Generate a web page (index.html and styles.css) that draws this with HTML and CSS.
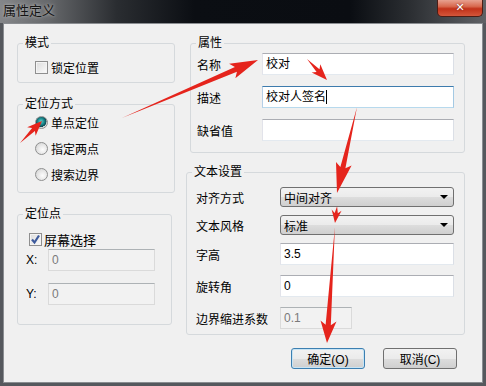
FILE: index.html
```html
<!DOCTYPE html>
<html lang="zh">
<head>
    <meta charset="UTF-8">
    <title>属性定义</title>
    <link rel="stylesheet" href="styles.css">
</head>
<body>
    <div class="window">
        <!-- Title bar -->
        <div class="titlebar">
            <span class="title">属性定义</span>
            <span class="close-btn">&#x2715;</span>
        </div>

        <div class="client">
            <!-- Left column -->
            <div class="col-left">
                <fieldset class="grp grp-mode">
                    <legend>模式</legend>
                    <div class="mode-body">
                        <label class="check-row"><span class="checkbox"></span>锁定位置</label>
                    </div>
                </fieldset>

                <fieldset class="grp grp-locate">
                    <legend>定位方式</legend>
                    <div class="locate-body">
                        <label class="radio-row"><span class="radio checked"></span>单点定位</label>
                        <label class="radio-row"><span class="radio"></span>指定两点</label>
                        <label class="radio-row"><span class="radio"></span>搜索边界</label>
                    </div>
                </fieldset>

                <fieldset class="grp grp-point">
                    <legend>定位点</legend>
                    <div class="point-body">
                        <label class="check-row screen-row">
                            <span class="checkbox checked">
                                <svg width="11" height="11" viewBox="0 0 11 11"><path d="M2 5.5 L4.5 8.5 L9 1.5" fill="none" stroke="#3d5a9c" stroke-width="2.2"/></svg>
                            </span>屏幕选择
                        </label>
                        <div class="xy-row"><span>X:</span><div class="input disabled">0</div></div>
                        <div class="xy-row y-row"><span>Y:</span><div class="input disabled">0</div></div>
                    </div>
                </fieldset>
            </div>

            <!-- Right column -->
            <div class="col-right">
                <fieldset class="grp grp-attr">
                    <legend>属性</legend>
                    <div class="attr-body">
                        <div class="form-row"><span>名称</span><div class="input">校对</div></div>
                        <div class="form-row"><span>描述</span><div class="input focused">校对人签名<span class="caret"></span></div></div>
                        <div class="form-row"><span>缺省值</span><div class="input"></div></div>
                    </div>
                </fieldset>

                <fieldset class="grp grp-text">
                    <legend>文本设置</legend>
                    <div class="text-body">
                        <div class="text-row"><span>对齐方式</span><div class="select">中间对齐<i class="arrow"></i></div></div>
                        <div class="text-row"><span>文本风格</span><div class="select">标准<i class="arrow"></i></div></div>
                        <div class="text-row tall"><span>字高</span><div class="input">3.5</div></div>
                        <div class="text-row tall spaced"><span>旋转角</span><div class="input">0</div></div>
                        <div class="text-row tall spaced"><span>边界缩进系数</span><div class="input disabled short">0.1</div></div>
                    </div>
                </fieldset>

                <div class="buttons">
                    <button class="btn default">确定(O)</button>
                    <button class="btn">取消(C)</button>
                </div>
            </div>
        </div>

        <!-- red annotation arrows -->
        <svg class="arrows" width="486" height="386" viewBox="0 0 486 386">
            <g fill="#e5241c">
                <polygon transform="translate(258 60) rotate(-23.1)" points="-148,0 -24,-2.6 -28,-8 0,0 -28,8 -24,2.6"/>
                <polygon transform="translate(42 121) rotate(-45)" points="-31,0 -12,-2 -15,-6 0,0 -15,6 -12,2"/>
                <polygon transform="translate(327 80) rotate(46.4)" points="-29,0 -13,-2 -16,-6 0,0 -16,6 -13,2"/>
                <polygon transform="translate(337 193) rotate(103.1)" points="-88,0 -26,-2.6 -30,-8 0,0 -30,8 -26,2.6"/>
                <polygon transform="translate(335 223) rotate(97.1)" points="-17,0 -10,-1.6 -13,-5 0,0 -13,5 -10,1.6"/>
                <polygon transform="translate(327 343) rotate(93.9)" points="-116,0 -18,-2.6 -22,-8 0,0 -22,8 -18,2.6"/>
            </g>
        </svg>
    </div>
</body>
</html>
```

FILE: styles.css
```css
* {
    margin: 0;
    padding: 0;
    box-sizing: border-box;
}

body {
    font-family: "Liberation Sans", "Noto Sans CJK SC", sans-serif;
    font-size: 12px;
    color: #000;
    background: #4a4d52;
}

.window {
    position: relative;
    width: 486px;
    height: 386px;
    background: #55585d;
}

/* Title bar */
.titlebar {
    height: 23px;
    display: flex;
    justify-content: space-between;
    align-items: flex-start;
    background: linear-gradient(to right, #85878a 0%, #66686b 10%, #2a2d31 24%, #0b0e13 40%, #0a0d12 72%, #2a2d31 84%, #606266 100%);
}

.title {
    padding: 3px 0 0 3px;
    font-size: 13px;
    line-height: 16px;
    color: #141414;
    text-shadow: 0 0 3px #bbb, 0 0 6px #999;
}

.close-btn {
    width: 46px;
    height: 17px;
    margin-right: 3px;
    border: 1px solid #4d1d15;
    border-top: none;
    border-radius: 0 0 5px 5px;
    background: linear-gradient(#e7a190 0%, #d8694f 40%, #c2321a 55%, #d4563a 100%);
    color: #fff;
    font: bold 11px/16px "DejaVu Sans", sans-serif;
    text-align: center;
    text-shadow: 0 0 2px #6b1a0e;
}

/* Client area */
.client {
    height: 360px;
    margin: 0 3px;
    border: 1px solid #8a8d91;
    background: #f0f0f0;
    padding: 12px 0 0 13px;
    display: grid;
    grid-template-columns: 158px 279px;
    column-gap: 11px;
    align-items: start;
}

.col-left,
.col-right {
    display: flex;
    flex-direction: column;
}

/* Group boxes */
.grp {
    border: 1px solid #d5d9dc;
    border-radius: 3px;
    min-width: 0;
}

.grp legend {
    margin-left: 5px;
    padding: 0 2px;
    font-size: 12px;
    line-height: 14px;
}

.grp-mode {
    height: 47px;
}

.grp-locate {
    height: 96px;
    margin-top: 14px;
}

.grp-point {
    width: 155px;
    height: 118px;
    margin-top: 14px;
}

.grp-attr {
    width: 275px;
    height: 117px;
    margin-left: 4px;
}

.grp-text {
    height: 170px;
    margin-top: 12px;
}

/* Checkbox and radio */
.check-row,
.radio-row {
    display: flex;
    align-items: center;
    gap: 3px;
}

.checkbox {
    width: 13px;
    height: 13px;
    border: 1px solid #8f8f8f;
    background: linear-gradient(135deg, #dcdcdc, #fbfbfb);
    box-shadow: inset 0 0 0 1px #f4f4f4;
    display: flex;
    align-items: center;
    justify-content: center;
}

.radio {
    width: 13px;
    height: 13px;
    border: 1px solid #8e8f8f;
    border-radius: 50%;
    background: radial-gradient(circle at 60% 60%, #fdfdfd 0%, #e2e2e2 60%, #c9c9c9 100%);
}

.radio.checked {
    background: radial-gradient(circle at 45% 40%, #5fd3d0 0%, #1c8a8e 35%, #0c4750 60%, #d7d7d7 64%, #f4f4f4 100%);
}

.mode-body {
    padding: 9px 0 0 17px;
}

.mode-body .check-row {
    height: 16px;
}

.locate-body {
    display: flex;
    flex-direction: column;
    gap: 6px;
    padding: 1px 0 0 17px;
}

.radio-row {
    height: 20px;
}

.point-body {
    padding-top: 8px;
}

.screen-row {
    height: 20px;
    padding-left: 11px;
    gap: 2px;
    font-size: 13px;
}

.xy-row {
    display: grid;
    grid-template-columns: 22px 107px;
    align-items: center;
    padding-left: 8px;
    height: 22px;
}

.y-row {
    margin-top: 12px;
}

/* Text boxes */
.input {
    height: 22px;
    border: 1px solid;
    border-color: #abadb3 #dbdfe6 #e3e9ef #e2e3ea;
    background: #fff;
    padding: 0 3px;
    line-height: 20px;
    display: flex;
    align-items: center;
}

.input.focused {
    border-color: #3d7bad #a4c9e3 #b7d9ed #b5cfe7;
}

.input.disabled {
    background: #f2f2f2;
    border-color: #adb2b5 #dadada #dadada #dadada;
    color: #7a7a7a;
}

.caret {
    width: 1px;
    height: 14px;
    background: #000;
}

.attr-body {
    display: flex;
    flex-direction: column;
    gap: 11px;
    padding: 3px 0 0 6px;
}

.form-row {
    display: grid;
    grid-template-columns: 65px 192px;
    align-items: center;
}

.text-body {
    display: flex;
    flex-direction: column;
    gap: 8px;
    padding: 8px 0 0 9px;
}

.text-row {
    display: grid;
    grid-template-columns: 84px 174px;
    align-items: center;
    height: 20px;
}

.text-row.tall {
    height: 22px;
}

.text-row.spaced {
    margin-top: 2px;
}

.input.short {
    width: 72px;
}

/* Combo boxes */
.select {
    height: 20px;
    border: 1px solid #707070;
    border-radius: 3px;
    background: linear-gradient(#f2f2f2 0%, #ebebeb 50%, #dddddd 51%, #cfcfcf 100%);
    padding: 0 5px 0 3px;
    display: flex;
    align-items: center;
    justify-content: space-between;
}

.arrow {
    width: 0;
    height: 0;
    border-left: 4px solid transparent;
    border-right: 4px solid transparent;
    border-top: 4px solid #000;
}

/* Buttons */
.buttons {
    display: flex;
    justify-content: flex-end;
    gap: 18px;
    margin-top: 13px;
    padding-right: 8px;
}

.btn {
    width: 74px;
    height: 21px;
    border: 1px solid #707070;
    border-radius: 3px;
    background: linear-gradient(#f2f2f2 0%, #ebebeb 50%, #dddddd 51%, #cfcfcf 100%);
    font-family: "Liberation Sans", "Noto Sans CJK SC", sans-serif;
    font-size: 12px;
    color: #000;
}

.btn.default {
    border-color: #3c7fb1;
    box-shadow: inset 0 0 0 1px #c8e4f4;
}

/* Annotation arrows */
.arrows {
    position: absolute;
    top: 0;
    left: 0;
    pointer-events: none;
}
```
